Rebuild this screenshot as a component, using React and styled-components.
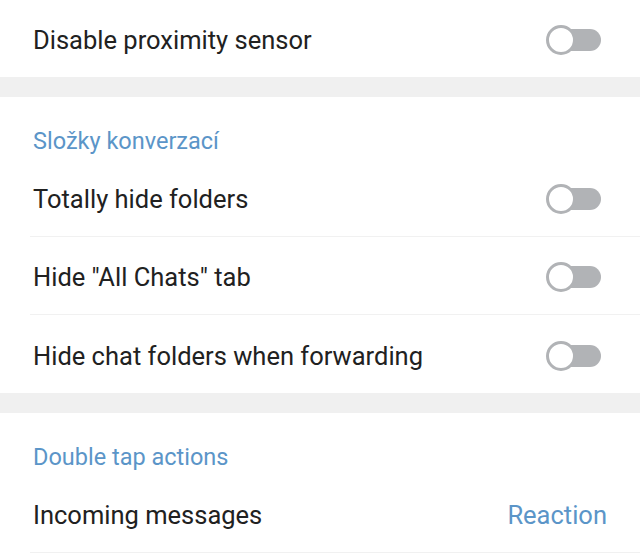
import React from 'react';
import styled, { createGlobalStyle } from 'styled-components';

const GlobalStyle = createGlobalStyle`
  html, body {
    margin: 0;
    padding: 0;
    background: #f0f0f0;
    font-family: Roboto, "Noto Sans", sans-serif;
  }
`;

const Page = styled.div`
  width: 640px;
  height: 560px;
  overflow: hidden;
  display: flex;
  flex-direction: column;
  gap: 20px;
  background: #f0f0f0;
`;

const Section = styled.div`
  background: #fff;
  display: flex;
  flex-direction: column;
  flex: ${(p) => (p.$fill ? '1' : 'none')};
`;

const Header = styled.div`
  height: 62px;
  box-sizing: border-box;
  padding: 31px 33px 0;
  font-size: 23.5px;
  line-height: 26px;
  color: #5b95c8;
`;

const Row = styled.div`
  height: ${(p) => (p.$first ? '77px' : '78px')};
  box-sizing: border-box;
  margin-left: 30px;
  padding: 3px 34px 0 3px;
  display: flex;
  align-items: center;
  justify-content: space-between;
  border-bottom: ${(p) => (p.$last ? 'none' : '1px solid #f1f1f1')};
`;

const Label = styled.span`
  font-size: 25.5px;
  color: #212121;
`;

const Value = styled.span`
  font-size: 25.5px;
  color: #5b95c8;
  margin-right: -1px;
`;

const Track = styled.div`
  position: relative;
  width: 54px;
  height: 22px;
  border-radius: 11px;
  background: #b1b3b6;
  margin-right: 5px;
`;

const Knob = styled.div`
  position: absolute;
  left: -1px;
  top: -4px;
  box-sizing: border-box;
  width: 30px;
  height: 30px;
  border-radius: 50%;
  background: #fff;
  border: 3.5px solid #b1b3b6;
`;

const Toggle = () => (
  <Track>
    <Knob />
  </Track>
);

export default function App() {
  return (
    <>
      <GlobalStyle />
      <Page>
        <Section>
          <Row $first $last>
            <Label>Disable proximity sensor</Label>
            <Toggle />
          </Row>
        </Section>
        <Section>
          <Header>Složky konverzací</Header>
          <Row>
            <Label>Totally hide folders</Label>
            <Toggle />
          </Row>
          <Row>
            <Label>Hide "All Chats" tab</Label>
            <Toggle />
          </Row>
          <Row $last>
            <Label>Hide chat folders when forwarding</Label>
            <Toggle />
          </Row>
        </Section>
        <Section $fill>
          <Header>Double tap actions</Header>
          <Row>
            <Label>Incoming messages</Label>
            <Value>Reaction</Value>
          </Row>
        </Section>
      </Page>
    </>
  );
}
